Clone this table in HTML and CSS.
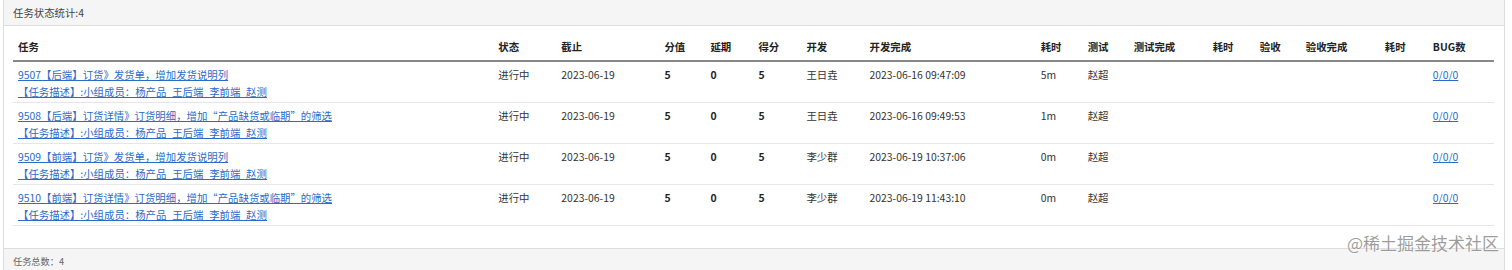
FILE: index.html
```html
<!DOCTYPE html>
<html lang="zh-CN">
<head>
<meta charset="utf-8">
<title>任务状态统计</title>
<link rel="stylesheet" href="styles.css">
</head>
<body>
<div class="panel">
  <div class="panel-heading">任务状态统计:4</div>
  <div class="panel-body">
    <table class="task-table">
      <colgroup>
        <col class="c-task"><col class="c-state"><col class="c-due"><col class="c-num"><col class="c-num2"><col class="c-num2">
        <col class="c-dev"><col class="c-devdone"><col class="c-time"><col class="c-test"><col class="c-done"><col class="c-time">
        <col class="c-test"><col class="c-done"><col class="c-time2"><col class="c-bug">
      </colgroup>
      <thead>
        <tr>
          <th>任务</th><th>状态</th><th>截止</th><th>分值</th><th>延期</th><th>得分</th><th>开发</th><th>开发完成</th>
          <th>耗时</th><th>测试</th><th>测试完成</th><th>耗时</th><th>验收</th><th>验收完成</th><th>耗时</th><th>BUG数</th>
        </tr>
      </thead>
      <tbody>
        <tr>
          <td><a class="link" href="#">9507【后端】订货》发货单，增加发货说明列</a><a class="link" href="#">【任务描述】:小组成员：杨产品_王后端_李前端_赵测</a></td>
          <td>进行中</td><td>2023-06-19</td><td class="b">5</td><td class="b">0</td><td class="b">5</td><td>王日垚</td><td>2023-06-16 09:47:09</td>
          <td>5m</td><td>赵超</td><td></td><td></td><td></td><td></td><td></td><td><a class="link" href="#">0/0/0</a></td>
        </tr>
        <tr>
          <td><a class="link" href="#">9508【后端】订货详情》订货明细，增加“产品缺货或临期”的筛选</a><a class="link" href="#">【任务描述】:小组成员：杨产品_王后端_李前端_赵测</a></td>
          <td>进行中</td><td>2023-06-19</td><td class="b">5</td><td class="b">0</td><td class="b">5</td><td>王日垚</td><td>2023-06-16 09:49:53</td>
          <td>1m</td><td>赵超</td><td></td><td></td><td></td><td></td><td></td><td><a class="link" href="#">0/0/0</a></td>
        </tr>
        <tr>
          <td><a class="link" href="#">9509【前端】订货》发货单，增加发货说明列</a><a class="link" href="#">【任务描述】:小组成员：杨产品_王后端_李前端_赵测</a></td>
          <td>进行中</td><td>2023-06-19</td><td class="b">5</td><td class="b">0</td><td class="b">5</td><td>李少群</td><td>2023-06-19 10:37:06</td>
          <td>0m</td><td>赵超</td><td></td><td></td><td></td><td></td><td></td><td><a class="link" href="#">0/0/0</a></td>
        </tr>
        <tr>
          <td><a class="link" href="#">9510【前端】订货详情》订货明细，增加“产品缺货或临期”的筛选</a><a class="link" href="#">【任务描述】:小组成员：杨产品_王后端_李前端_赵测</a></td>
          <td>进行中</td><td>2023-06-19</td><td class="b">5</td><td class="b">0</td><td class="b">5</td><td>李少群</td><td>2023-06-19 11:43:10</td>
          <td>0m</td><td>赵超</td><td></td><td></td><td></td><td></td><td></td><td><a class="link" href="#">0/0/0</a></td>
        </tr>
      </tbody>
    </table>
  </div>
  <div class="panel-footer">任务总数：4</div>
</div>
<div class="watermark">@稀土掘金技术社区</div>
</body>
</html>
```

FILE: styles.css
```css
html, body {
  margin: 0;
  padding: 0;
  background: #fff;
}
body {
  font-family: "Noto Sans CJK SC", "Noto Sans", sans-serif;
  font-size: 10.4px;
  color: #333;
  position: relative;
  height: 270px;
  overflow: hidden;
}
.panel {
  box-sizing: border-box;
  width: 1502px;
  margin-left: 3px;
  border: 1px solid #ddd;
  border-top: none;
}
.panel-heading {
  height: 25px;
  line-height: 25px;
  padding: 0 9px;
  background: #f5f5f5;
  border-bottom: 1px solid #ddd;
  color: #444;
}
.panel-body {
  padding: 4px 9px 22px;
}
.task-table {
  border-collapse: collapse;
  table-layout: fixed;
  width: 1481px;
}
.c-task { width: 480px; }
.c-state { width: 63px; }
.c-due { width: 103px; }
.c-num { width: 46px; }
.c-num2 { width: 48px; }
.c-dev { width: 63px; }
.c-devdone { width: 171px; }
.c-time { width: 47px; }
.c-test { width: 46px; }
.c-done { width: 79px; }
.c-time2 { width: 48px; }
.c-bug { width: 66px; }
.task-table th {
  text-align: left;
  font-weight: bold;
  padding: 8px 5px 4px;
  line-height: 18px;
  border-bottom: 2px solid #888;
  white-space: nowrap;
  color: #222;
}
.task-table td {
  padding: 4px 5px 2px;
  line-height: 17px;
  border-bottom: 1px solid #e6e6e6;
  vertical-align: top;
  white-space: nowrap;
}
.task-table td.b {
  font-weight: bold;
  color: #222;
}
.link {
  display: block;
  color: #2b6bc9;
  text-decoration: underline;
}
.panel-footer {
  height: 22px;
  line-height: 22px;
  padding: 1px 9px 0;
  background: #f5f5f5;
  border-top: 1px solid #ddd;
  font-size: 9.2px;
  color: #666;
}
.watermark {
  position: absolute;
  right: 13px;
  top: 232px;
  font-size: 17px;
  line-height: 22px;
  color: rgba(140, 140, 140, 0.85);
  text-shadow: 0 0 2px #fff;
  font-family: "Noto Sans CJK SC", sans-serif;
}
```
